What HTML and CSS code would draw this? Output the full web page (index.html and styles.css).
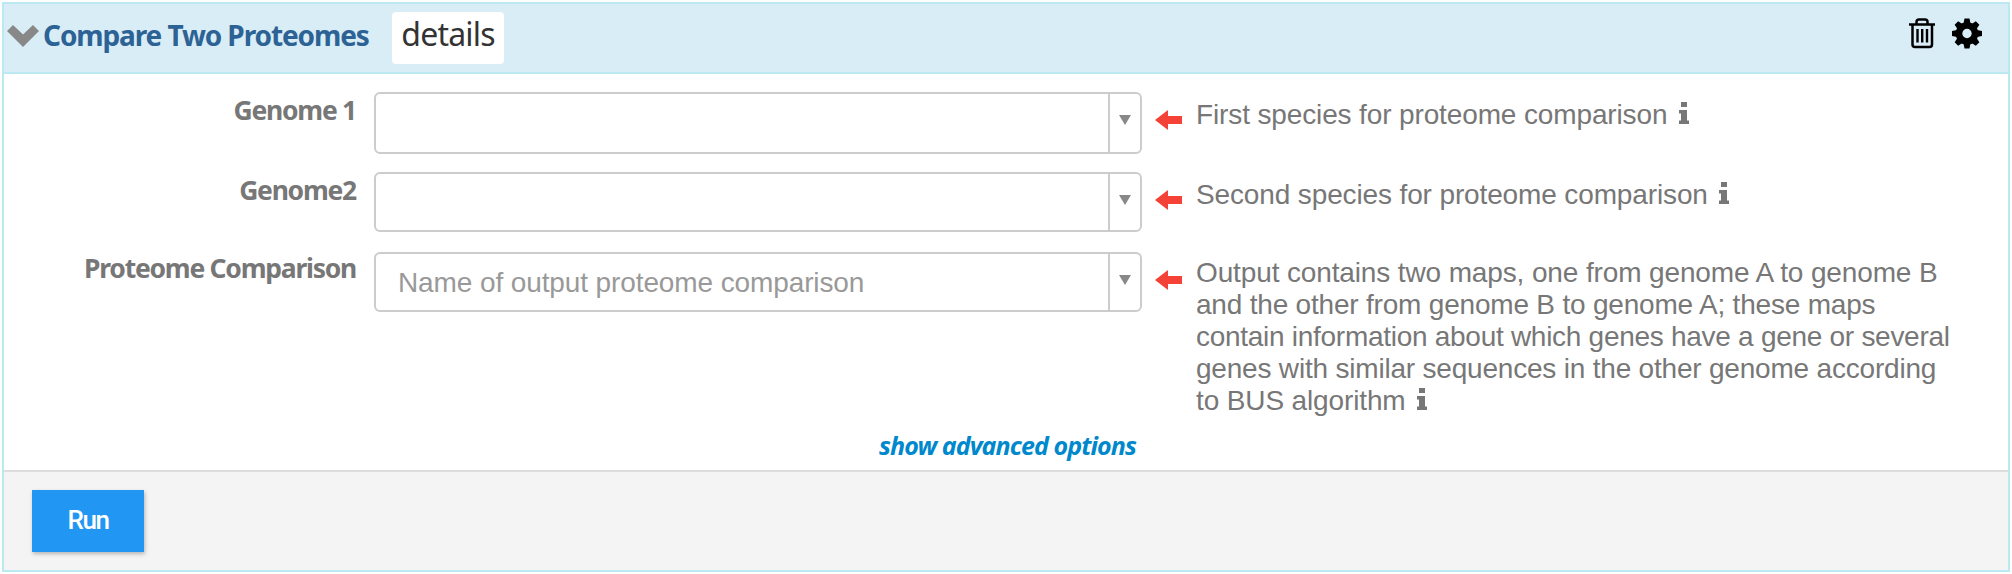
FILE: index.html
```html
<!DOCTYPE html>
<html lang="en">
<head>
<meta charset="utf-8">
<title>Compare Two Proteomes</title>
<link rel="stylesheet" href="styles.css">
</head>
<body>
<section class="panel">
  <header class="panel-head">
    <svg class="chevron" viewBox="0 0 32 22"><path d="M0 6L6 0L16 9.5L26 0L32 6L16 22Z"/></svg>
    <h1 class="title">Compare Two Proteomes</h1>
    <span class="details"><span class="details-text">details</span></span>
    <div class="actions">
      <svg class="trash" viewBox="0 0 26 31"><g fill="none" stroke="#000"><path stroke-width="2.5" d="M0 6.5H26M7.5 6.5V4Q7.500 1.500 10 1.500H16Q18.500 1.500 18.500 4V6.500M3.500 7V26.500Q3.500 29 6 29H20.500Q23 29 23 26.500V7"/><path stroke-width="2.400" d="M8.500 11V24.500M13.200 11V24.500M18 11V24.500"/></g></svg>
      <svg class="gear" viewBox="-15 -15 30 30"><circle r="8" fill="none" stroke="#000" stroke-width="6.600"/><g id="teeth"><path d="M-3.500 -10L-2.500 -15H2.500L3.500 -10ZM-3.500 10L-2.500 15H2.500L3.500 10ZM-10 -3.500L-15 -2.500V2.500L-10 3.500ZM10 -3.500L15 -2.500V2.500L10 3.500Z"/></g><use href="#teeth" transform="rotate(45)"/></svg>
    </div>
  </header>
  <main class="form">
    <div class="row">
      <label class="label">Genome 1</label>
      <div class="select tall"><span class="value"></span><span class="toggle"><svg viewBox="0 0 12 10"><path d="M0 0H12L6 10Z"/></svg></span></div>
      <svg class="required" viewBox="0 0 27 20"><path d="M0 10L13 0V6H27V14H13V20Z"/></svg>
      <p class="help">First species for proteome comparison <svg class="info" viewBox="0 0 10 22"><path d="M2 0H8V5H2ZM0 8H8V18.500H10V22H0V18.500H2V11.500H0Z"/></svg></p>
    </div>
    <div class="row">
      <label class="label">Genome2</label>
      <div class="select"><span class="value"></span><span class="toggle"><svg viewBox="0 0 12 10"><path d="M0 0H12L6 10Z"/></svg></span></div>
      <svg class="required" viewBox="0 0 27 20"><path d="M0 10L13 0V6H27V14H13V20Z"/></svg>
      <p class="help">Second species for proteome comparison <svg class="info" viewBox="0 0 10 22"><path d="M2 0H8V5H2ZM0 8H8V18.500H10V22H0V18.500H2V11.500H0Z"/></svg></p>
    </div>
    <div class="row last">
      <label class="label raised">Proteome Comparison</label>
      <div class="select"><span class="value">Name of output proteome comparison</span><span class="toggle"><svg viewBox="0 0 12 10"><path d="M0 0H12L6 10Z"/></svg></span></div>
      <svg class="required" viewBox="0 0 27 20"><path d="M0 10L13 0V6H27V14H13V20Z"/></svg>
      <p class="help long">Output contains two maps, one from genome A to genome B<br><span class="snug">and the other from genome B to genome A; these maps</span><br><span class="tight">contain information about which genes have a gene or several</span><br><span class="snug">genes with similar sequences in the other genome according</span><br>to BUS algorithm <svg class="info" viewBox="0 0 10 22"><path d="M2 0H8V5H2ZM0 8H8V18.500H10V22H0V18.500H2V11.500H0Z"/></svg></p>
    </div>
    <a class="advanced">show advanced options</a>
  </main>
  <footer class="foot"><button class="run">Run</button></footer>
</section>
</body>
</html>
```
FILE: styles.css
```css
* { box-sizing: border-box; }
body { margin: 0; padding: 2px; background: #fff; font-family: "Noto Sans", sans-serif; }
.panel { width: 2008px; height: 570px; border: 2px solid #bce8f1; display: flex; flex-direction: column; }
.panel-head { height: 70px; flex: none; background: #d9edf7; border-bottom: 2px solid #bce8f1; display: flex; align-items: flex-start; padding-left: 3px; }
.chevron { width: 32px; height: 22px; margin-top: 21px; fill: #888; }
.title { margin: 11px 0 0 4px; width: 349px; font-size: 28px; line-height: 40px; font-weight: 700; color: #2d6294; letter-spacing: -1.1px; white-space: nowrap; }
.details { width: 112px; height: 52px; margin-top: 8px; background: #fff; border-radius: 4px; text-align: center; color: #333; }
.details-text { display: block; font-size: 32px; line-height: 44px; letter-spacing: -0.8px; }
.actions { margin-left: auto; padding: 14px 26px 0 0; display: flex; gap: 17px; }
.trash { width: 26px; height: 31px; }
.gear { width: 30px; height: 31px; }
.form { height: 396px; flex: none; padding-top: 18px; display: flex; flex-direction: column; }
.row { display: flex; height: 80px; align-items: flex-start; }
.row.last { height: 177px; }
.label { width: 352px; padding-top: 1px; text-align: right; font-size: 26.5px; line-height: 34px; font-weight: 700; color: #777; letter-spacing: -1.25px; white-space: nowrap; }
.label.raised { padding-top: 0; margin-top: -1px; }
.select { width: 768px; height: 60px; margin-left: 18px; border: 2px solid #ccc; border-radius: 6px; display: flex; }
.select.tall { height: 62px; }
.value { flex: 1; padding: 1px 0 0 22px; font: 28px/56px "Liberation Sans", sans-serif; letter-spacing: -0.11px; color: #999; white-space: nowrap; }
.toggle { width: 32px; border-left: 2px solid #ccc; padding: 21px 0 0 9px; }
.toggle svg { display: block; width: 12px; height: 10px; fill: #888; }
.required { width: 27px; height: 20px; margin: 18px 0 0 13px; fill: #f44336; }
.help { margin: 7px 0 0 14px; font: 28px/32px "Liberation Sans", sans-serif; letter-spacing: -0.13px; color: #777; white-space: nowrap; }
.help.long { margin-top: 5px; }
.snug { letter-spacing: -0.2px; }
.tight { letter-spacing: -0.28px; }
.info { width: 10px; height: 22px; margin-left: 4px; fill: #777; }
.advanced { align-self: flex-end; margin-right: 872px; font-size: 25px; line-height: 32px; font-weight: 700; font-style: italic; color: #0088cc; letter-spacing: -0.9px; }
.foot { flex: 1; background: #f4f4f4; border-top: 2px solid #ddd; padding: 18px 0 0 28px; }
.run { display: block; width: 112px; height: 62px; border: 0; padding: 0 0 2px; background: #2196f3; color: #fff; font: 500 26px/58px Roboto, sans-serif; letter-spacing: -1.4px; box-shadow: 1px 2px 4px rgba(0,0,0,.26); }
```
